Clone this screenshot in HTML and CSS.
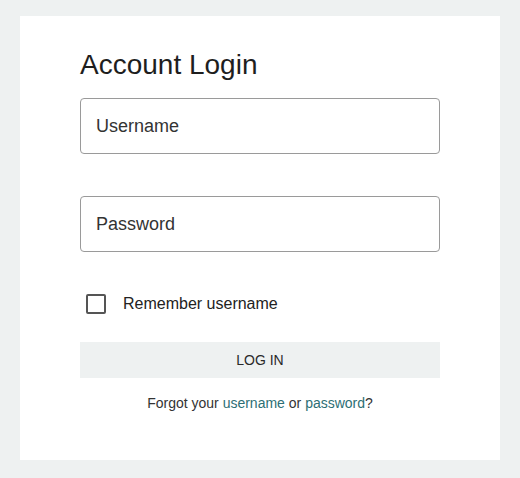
FILE: index.html
```html
<!DOCTYPE html>
<html lang="en">
<head>
<meta charset="utf-8">
<title>Account Login</title>
<link rel="stylesheet" href="styles.css">
</head>
<body>
<main class="card">
  <h1 class="title">Account Login</h1>
  <form class="form">
    <input class="field field-user" type="text" placeholder="Username">
    <input class="field" type="password" placeholder="Password">
    <label class="remember">
      <input class="check" type="checkbox">
      <span class="remember-text">Remember username</span>
    </label>
    <button class="login" type="button">LOG IN</button>
    <p class="forgot">Forgot your <a href="#">username</a> or <a href="#">password</a>?</p>
  </form>
</main>
</body>
</html>
```
FILE: styles.css
```css
html, body {
  margin: 0;
  padding: 0;
  background: #eef1f1;
}
body {
  padding: 16px 20px 0 20px;
  font-family: "Liberation Sans", Arial, sans-serif;
  color: #222;
}
.card {
  width: 480px;
  box-sizing: border-box;
  background: #fff;
  padding: 32px 60px 47px 60px;
}
.title {
  margin: 0 0 16px 0;
  font-size: 28px;
  line-height: 34px;
  font-weight: normal;
  color: #1e1e1e;
}
.form {
  display: flex;
  flex-direction: column;
  margin: 0;
}
.field {
  display: block;
  box-sizing: border-box;
  width: 360px;
  height: 56px;
  margin: 0;
  padding: 0 15px;
  border: 1px solid #9a9a9a;
  border-radius: 4px;
  font-family: "Liberation Sans", Arial, sans-serif;
  font-size: 18px;
  color: #222;
  background: #fff;
  outline: none;
}
.field::placeholder {
  color: #333;
  opacity: 1;
}
.field-user {
  margin-bottom: 42px;
}
.remember {
  display: flex;
  align-items: center;
  height: 40px;
  margin-top: 32px;
  padding-left: 6px;
}
.check {
  appearance: none;
  -webkit-appearance: none;
  box-sizing: border-box;
  width: 20px;
  height: 20px;
  margin: 0 17px 0 0;
  border: 2px solid #555;
  border-radius: 2px;
  background: #fff;
}
.remember-text {
  font-size: 16px;
  color: #222;
}
.login {
  margin-top: 18px;
  height: 36px;
  width: 360px;
  border: none;
  border-radius: 0;
  background: #eef1f1;
  font-family: "Liberation Sans", Arial, sans-serif;
  font-size: 14px;
  color: #2a2a2a;
  padding: 0;
}
.forgot {
  margin: 15px 0 0 0;
  text-align: center;
  font-size: 14px;
  line-height: 20px;
  color: #333;
}
.forgot a {
  color: #2d6f75;
  text-decoration: none;
}
```
